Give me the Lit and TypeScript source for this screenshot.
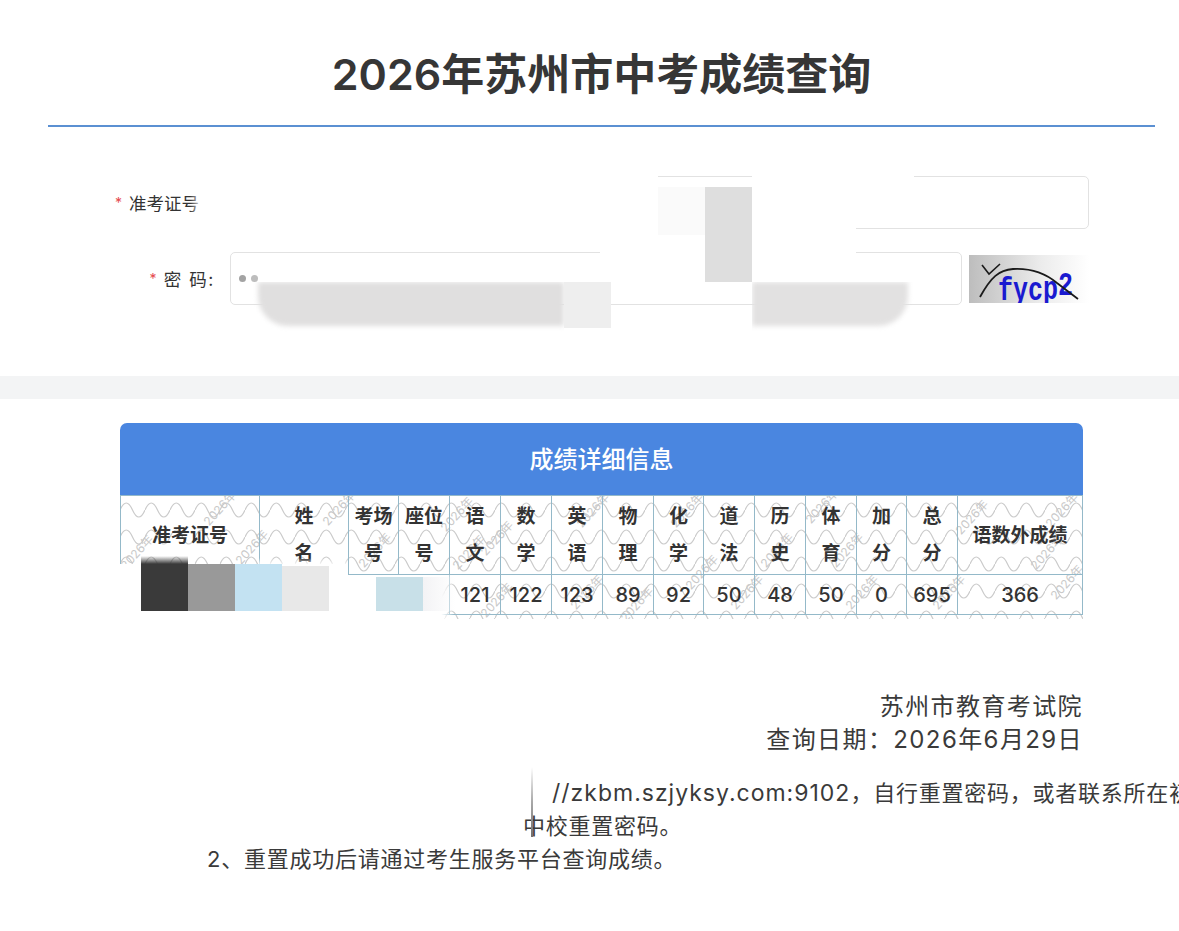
import { LitElement, html, css, svg } from "lit";
import { customElement } from "lit/decorators.js";

const HEAD: [string, string][] = [
  ["姓", "名"], ["考场", "号"], ["座位", "号"], ["语", "文"], ["数", "学"], ["英", "语"], ["物", "理"],
  ["化", "学"], ["道", "法"], ["历", "史"], ["体", "育"], ["加", "分"], ["总", "分"],
];
const WIDTHS = [139, 89, 50, 51, 51, 51, 51, 51, 50, 51, 51, 51, 50, 51, 125];
const VALUES = ["", "", "", "121", "122", "123", "89", "92", "50", "48", "50", "0", "695"];
const MARKS: [number, number][] = [
  [103, 16], [20, 60], [135, 55], [222, 16], [258, 58], [340, 22], [352, 60], [380, 46],
  [476, 18], [470, 100], [570, 18], [585, 80], [630, 100], [660, 58], [705, 14], [730, 58], [745, 100], [855, 25],
  [832, 100], [930, 60], [945, 18], [950, 90], [380, 108], [520, 112],
];
const MOSAIC = [
  { x: 141, t: 564, h: 47, c: "#3a3a3a" }, { x: 188, t: 564, h: 47, c: "#999999" }, { x: 235, t: 564, h: 47, c: "#c3e2f2" },
  { x: 282, t: 566, h: 45, c: "#e8e8e8" }, { x: 376, t: 577, h: 34, c: "#c8e0e8" },
];

@customElement("app-root")
export class AppRoot extends LitElement {
  static styles = css`
    :host { display: block; position: relative; width: 1179px; height: 931px; overflow: hidden; background: #fff; color: #333; font-family: Inter, "Noto Sans CJK SC", sans-serif; }
    .top { margin: 0 24px 0 48px; height: 127px; box-sizing: border-box; border-bottom: 2px solid #5b90d2; text-align: center; }
    h1 { margin: 0; padding-top: 44px; font-size: 43px; line-height: 60px; font-weight: 600; color: #363636; }
    .form { display: grid; grid-template-columns: 230px 732px 127px; grid-template-rows: 53px 53px; row-gap: 23px; padding-top: 49px; height: 249px; box-sizing: border-box; }
    .label { display: flex; justify-content: flex-end; align-items: center; gap: 7px; padding-right: 15px; font-size: 17.5px; color: #333; }
    .label.first { justify-content: flex-start; padding-left: 115px; padding-right: 0; }
    .spaced { letter-spacing: 1.6px; }
    .req { color: #e5484d; font-size: 14px; }
    .box { border: 1.5px solid #e2e2e2; border-radius: 5px; box-sizing: border-box; background: #fff; }
    .wide { grid-column: 2 / 4; }
    .pw { display: flex; align-items: center; gap: 5px; padding-left: 8px; }
    .dot { width: 7px; height: 7px; border-radius: 50%; background: #a3a3a3; }
    .dot.two { background: #bdbdbd; }
    .cap { margin: 3px 0 0 7px; width: 120px; height: 48px; display: block; }
    .band { height: 23px; background: #f3f4f5; }
    .panel { position: relative; margin: 24px 96px 0 120px; width: 963px; height: 191px; }
    .ph { height: 72px; line-height: 74px; background: #4a86e0; border-radius: 7px 7px 0 0; color: #fff; text-align: center; font-size: 24px; font-weight: 500; }
    .wm { position: absolute; left: 0; top: 72px; width: 963px; height: 124px; }
    table { position: relative; border-collapse: collapse; table-layout: fixed; width: 963px; }
    th, td { border: 1px solid #94b9c9; padding: 0; text-align: center; color: #333; }
    th { height: 78px; font-size: 19px; font-weight: 600; line-height: 37px; }
    td { height: 39px; font-size: 20px; font-weight: 500; }
    .foot { margin-top: 76px; padding-right: 96px; text-align: right; font-size: 24px; line-height: 33px; color: #3a3a3a; letter-spacing: 1.4px; }
    .notes { position: relative; margin-top: 21px; font-size: 22px; line-height: 33px; color: #3a3a3a; white-space: nowrap; letter-spacing: 0.75px; }
    .url { font-size: 23px; letter-spacing: 1px; }
    .n1 { padding-left: 552px; }
    .n2 { padding-left: 523px; }
    .n3 { padding-left: 207px; }
    .over { position: absolute; }
    .mask { background: #fff; }
    .g1 { left: 258px; top: 282px; width: 306px; height: 44px; background: #e0dfdf; border-radius: 0 0 0 30px; filter: blur(2.5px); clip-path: inset(0 0 -10px -10px); }
    .g2 { left: 564px; top: 282px; width: 47px; height: 46px; background: #eeeeee; }
    .g3 { left: 752px; top: 282px; width: 156px; height: 44px; background: #e2e1e1; border-radius: 0 0 30px 0; filter: blur(2.5px); clip-path: inset(0 -10px -10px 0); }
    .g4 { left: 705px; top: 187px; width: 47px; height: 95px; background: #dedede; }
    .g5 { left: 658px; top: 187px; width: 47px; height: 48px; background: #fafafa; }
    .m1 { left: 190px; top: 170px; width: 468px; height: 72px; background: linear-gradient(90deg, #fff0, #fff 13px); }
    .m2 { left: 752px; top: 170px; width: 162px; height: 7px; }
    .m3 { left: 752px; top: 177px; width: 104px; height: 72px; }
    .m4 { left: 600px; top: 240px; width: 105px; height: 42px; }
    .m5 { left: 752px; top: 249px; width: 104px; height: 33px; }
    .m6 { left: 118px; top: 564px; width: 230px; height: 56px; }
    .m8 { left: 348px; top: 575px; width: 106px; height: 45px; background: linear-gradient(90deg, #fff, #fff 88%, #fff0); }
    .m7 { left: 258px; top: 558px; width: 90px; height: 8px; background: linear-gradient(#fff0, #fff); }
    .tile { width: 47px; }
    .tail { left: 423px; top: 577px; width: 32px; height: 34px; background: linear-gradient(90deg, #f3f3f5, #f8f8f900); }
    .fade { left: 141px; top: 556px; width: 47px; height: 8px; background: linear-gradient(#3a3a3a00, #3a3a3a); }
    .rule { left: 531px; top: 767px; width: 2px; height: 70px; background: linear-gradient(#c8c8c800, #a8a8a8 50%, #707070); }
  `;

  private captcha() {
    return html`<svg class="cap" viewBox="0 0 120 48" aria-label="验证码">
      <defs><linearGradient id="cg" x1="0" x2="1"><stop offset="0" stop-color="#bdbdbd"/><stop offset="0.6" stop-color="#ececec"/><stop offset="1" stop-color="#fff"/></linearGradient></defs>
      <rect width="120" height="48" fill="url(#cg)"/>
      <text transform="translate(29 45) scale(1 1.35)" fill="#1a1ad0" font-family="'Liberation Mono', monospace" font-weight="700" font-size="25" dy="0 0 0 -1 -3">fycp2</text>
      <path d="M11 42 C22 22 30 15 44 14 C62 13 76 18 88 28 L109 44" fill="none" stroke="#1a1a1a" stroke-width="1.8"/>
      <path d="M13 10 L20 19 L31 9" fill="none" stroke="#1a1a1a" stroke-width="1.6"/>
    </svg>`;
  }

  private watermark() {
    return html`<svg class="wm" viewBox="0 0 963 124" aria-hidden="true">
      <defs><pattern id="wave" width="25" height="27" patternUnits="userSpaceOnUse">
        <path d="M0 15 Q6.25 1 12.5 15 T25 15" fill="none" stroke="#cbcbcb" stroke-width="1.2"/>
      </pattern></defs>
      <rect width="963" height="124" fill="url(#wave)"/>
      ${MARKS.map(([x, y]) => svg`<text transform="translate(${x} ${y}) rotate(-48)" text-anchor="middle" font-size="12" fill="#c9c9c9">2026年</text>`)}
    </svg>`;
  }

  render() {
    return html`
      <div class="top"><h1>2026年苏州市中考成绩查询</h1></div>
      <div class="form">
        <div class="label first"><span class="req">*</span><span>准考证号</span></div>
        <div class="box wide"></div>
        <div class="label"><span class="req">*</span><span class="spaced">密 码:</span></div>
        <div class="box pw"><i class="dot"></i><i class="dot two"></i></div>
        ${this.captcha()}
      </div>
      <div class="band"></div>
      <div class="panel">
        <div class="ph">成绩详细信息</div>
        ${this.watermark()}
        <table>
          <colgroup>${WIDTHS.map((w) => html`<col style="width:${w}px" />`)}</colgroup>
          <tr>
            <th>准考证号</th>
            ${HEAD.map(([a, b]) => html`<th>${a}<br />${b}</th>`)}
            <th>语数外成绩</th>
          </tr>
          <tr>
            <td></td>
            ${VALUES.map((v) => html`<td>${v}</td>`)}
            <td>366</td>
          </tr>
        </table>
      </div>
      <div class="foot">苏州市教育考试院<br />查询日期：2026年6月29日</div>
      <div class="notes">
        <div class="n1"><span class="url">//zkbm.szjyksy.com:9102</span>，自行重置密码，或者联系所在初</div>
        <div class="n2">中校重置密码。</div>
        <div class="n3">2、重置成功后请通过考生服务平台查询成绩。</div>
      </div>

      <div class="over mask m1"></div><div class="over mask m2"></div><div class="over mask m3"></div>
      <div class="over mask m4"></div><div class="over mask m5"></div>
      <div class="over g5"></div><div class="over g4"></div><div class="over g1"></div><div class="over g2"></div><div class="over g3"></div>
      <div class="over mask m6"></div><div class="over m8"></div><div class="over m7"></div><div class="over fade"></div>
      ${MOSAIC.map((t) => html`<div class="over tile" style="left:${t.x}px;top:${t.t}px;height:${t.h}px;background:${t.c}"></div>`)}
      <div class="over tail"></div>
      <div class="over rule"></div>
    `;
  }
}
